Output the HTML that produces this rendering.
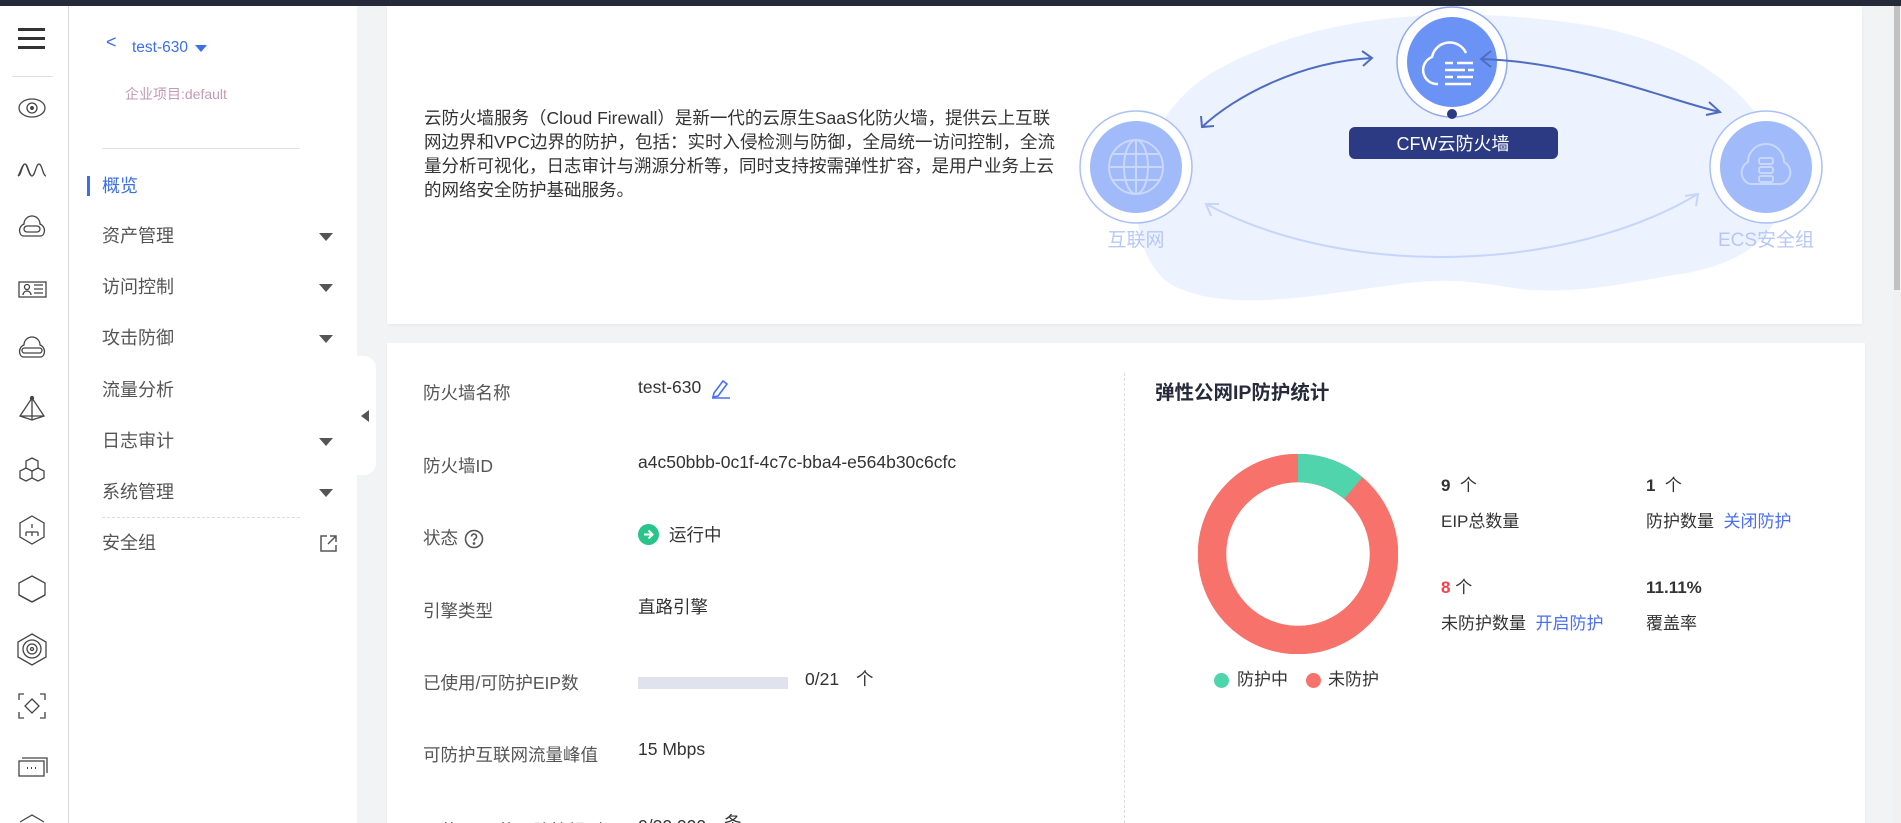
<!DOCTYPE html>
<html><head><meta charset="utf-8">
<style>
*{margin:0;padding:0;box-sizing:border-box}
html,body{width:1901px;height:823px;overflow:hidden}
body{background:#f2f3f5;font-family:"Liberation Sans","Noto Sans CJK SC",sans-serif;position:relative;color:#333}
.a{position:absolute;white-space:nowrap}
.top{left:0;top:0;width:1901px;height:6px;background:#252a3a}
.rail{left:0;top:6px;width:69px;height:817px;background:#fff;border-right:1px solid #d8d8d8}
.side{left:69px;top:6px;width:288px;height:817px;background:#fff}
.menu{font-size:18px;color:#555;left:102px;line-height:22px}
.tri{width:0;height:0;border-left:7px solid transparent;border-right:7px solid transparent;border-top:8px solid #555;left:319px}
.card{background:#fff;box-shadow:0 1px 3px rgba(0,0,0,.05)}
.lbl{left:423px;font-size:17.5px;color:#555;line-height:22px}
.val{left:638px;font-size:17.5px;color:#333;line-height:22px}
.st{font-size:17px;color:#333;line-height:22px}
</style></head><body>
<div class="a top"></div>
<div class="a rail"></div>
<div class="a side"></div>
<div class="a" style="left:18px;top:28px;width:27px;height:3px;background:#333"></div>
<div class="a" style="left:18px;top:37px;width:27px;height:3px;background:#333"></div>
<div class="a" style="left:18px;top:46px;width:27px;height:3px;background:#333"></div>
<div class="a" style="left:12px;top:76px;width:41px;height:1px;background:#dde0ea"></div>
<svg class="a" style="left:0;top:80px" width="69" height="743" fill="none" stroke="#444" stroke-width="1.3">
<ellipse cx="32" cy="28" rx="13" ry="9"/><circle cx="32" cy="28" r="5"/><circle cx="32" cy="28" r="1.3" fill="#444"/>
<path d="M18 96c3 0 4-12 7-12s4 12 7 12 4-12 7-12 4 12 7 12M18 96c2-2 4-12 7-12M25 84c2 0 4 12 7 12"/>
<path d="M20 153a7 7 0 0 1 4-9a8 8 0 0 1 16 0a7 7 0 0 1 4 9a4 4 0 0 1-4 3h-16a4 4 0 0 1-4-3z"/><rect x="24" y="146" width="16" height="6" rx="3"/>
<rect x="19" y="202" width="27" height="15"/><circle cx="27" cy="207" r="2.5"/><path d="M23 215a4 4 0 0 1 8 0M34 205h9M34 209h9M34 213h9"/>
<path d="M20 274a7 7 0 0 1 4-9a8 8 0 0 1 16 0a7 7 0 0 1 4 9a4 4 0 0 1-4 3h-16a4 4 0 0 1-4-3z"/><rect x="22" y="268" width="20" height="5" rx="2.5"/>
<path d="M32 318v22M32 318l-12 18 12 4 12-4zM20 336h24"/><circle cx="32" cy="318" r="1.5" fill="#444"/>
<path d="M32 378l6 3v7l-6 3-6-3v-7zM26 388l6 3v7l-6 3-6-3v-7zM38 388l6 3v7l-6 3-6-3v-7z"/>
<path d="M32 436l12 7v14l-12 7-12-7v-14z"/><path d="M32 444v4M26 452h12M26 452v4M32 452v4M38 452v4"/>
<path d="M32 496l13 7v12l-13 7-13-7v-12z"/><path d="M19 515l13 7 13-7"/>
<path d="M32 554l14 8v15l-14 8-14-8v-15z"/><circle cx="32" cy="569" r="9"/><circle cx="32" cy="569" r="5"/><circle cx="32" cy="569" r="1.5"/>
<path d="M19 620v-6h5M45 620v-6h-5M19 632v6h5M45 632v6h-5M32 619l7 7-7 7-7-7z"/>
<rect x="19" y="681" width="25" height="15"/><path d="M22 678h25v15"/><path d="M27 688h1M31 688h1M35 688h1" stroke-width="2"/>
<path d="M20 742l12-7 12 7"/>
</svg>
<div class="a" style="left:106px;top:32px;font-size:18px;color:#3b6fe8">&lt;</div>
<div class="a" style="left:132px;top:39px;font-size:15.5px;color:#3b6fe8">test-630</div>
<div class="a" style="left:195px;top:45px;width:0;height:0;border-left:6px solid transparent;border-right:6px solid transparent;border-top:7px solid #3b6fe8"></div>
<div class="a" style="left:125px;top:84px;font-size:14px;color:#c49ab8">企业项目:default</div>
<div class="a" style="left:102px;top:148px;width:198px;height:1px;background:#e3e3e3"></div>
<div class="a" style="left:87px;top:176px;width:3px;height:20px;background:#3b6fe8"></div>
<div class="a menu" style="top:175px;color:#3b6fe8">概览</div>
<div class="a menu" style="top:225px">资产管理</div><div class="a tri" style="top:233px"></div>
<div class="a menu" style="top:276px">访问控制</div><div class="a tri" style="top:284px"></div>
<div class="a menu" style="top:327px">攻击防御</div><div class="a tri" style="top:335px"></div>
<div class="a menu" style="top:379px">流量分析</div>
<div class="a menu" style="top:430px">日志审计</div><div class="a tri" style="top:438px"></div>
<div class="a menu" style="top:481px">系统管理</div><div class="a tri" style="top:489px"></div>
<div class="a" style="left:102px;top:517px;width:198px;border-top:1px dashed #ddd"></div>
<div class="a menu" style="top:532px">安全组</div>
<svg class="a" style="left:319px;top:534px" width="19" height="19" fill="none" stroke="#555" stroke-width="1.5"><path d="M8 2H2v15h15v-6M11 2h6v6M17 2l-8 8"/></svg>
<div class="a" style="left:357px;top:356px;width:19px;height:119px;background:#fff;border-radius:0 12px 12px 0"></div>
<div class="a" style="left:361px;top:410px;width:0;height:0;border-top:6px solid transparent;border-bottom:6px solid transparent;border-right:8px solid #555"></div>
<div class="a card" style="left:387px;top:6px;width:1475px;height:318px"></div>
<div class="a" style="left:424px;top:106px;font-size:17.5px;line-height:24px;color:#333">云防火墙服务（Cloud Firewall）是新一代的云原生SaaS化防火墙，提供云上互联<br>网边界和VPC边界的防护，包括：实时入侵检测与防御，全局统一访问控制，全流<br>量分析可视化，日志审计与溯源分析等，同时支持按需弹性扩容，是用户业务上云<br>的网络安全防护基础服务。</div>
<svg class="a" style="left:1060px;top:6px" width="800" height="318">
<path d="M110 280 C55 240 70 120 150 70 C270 0 420 5 520 20 C620 35 690 80 720 150 C740 220 690 260 620 270 C560 280 520 290 460 285 C400 275 380 275 340 280 C250 292 165 310 110 280Z" fill="#ecf2fe" transform="translate(0,-2)"/>
<circle cx="392" cy="56" r="55" fill="#fff" stroke="#8fa9f5" stroke-width="1.5"/>
<circle cx="392" cy="56" r="45" fill="#6b93f6"/>
<path d="M378 78a14 14 0 0 1-6-27a18 18 0 0 1 34-4" fill="none" stroke="#fff" stroke-width="2.5"/>
<path d="M385 57h8M397 57h16M385 64h20M408 64h6M385 71h8M397 71h16M385 78h26" stroke="#fff" stroke-width="2.5"/>
<circle cx="392" cy="108" r="5" fill="#2b3a82"/>
<rect x="289" y="121" width="209" height="32" rx="6" fill="#2b3a82"/>
<text x="393" y="144" font-size="18" fill="#fff" text-anchor="middle" font-family="Liberation Sans,Noto Sans CJK SC,sans-serif">CFW云防火墙</text>
<circle cx="76" cy="161" r="56" fill="#fff" stroke="#a9bff8" stroke-width="1.5"/>
<circle cx="76" cy="161" r="46" fill="#a1baf9"/>
<g fill="none" stroke="#c9d7fb" stroke-width="2"><circle cx="76" cy="161" r="27"/><ellipse cx="76" cy="161" rx="12" ry="27"/><path d="M76 134v54M49 161h54M53 148h46M53 174h46"/></g>
<text x="76" y="240" font-size="19" fill="#b6c8f7" text-anchor="middle" font-family="Liberation Sans,Noto Sans CJK SC,sans-serif">互联网</text>
<circle cx="706" cy="161" r="56" fill="#fff" stroke="#a9bff8" stroke-width="1.5"/>
<circle cx="706" cy="161" r="46" fill="#a1baf9"/>
<path d="M690 178a12 12 0 0 1-2-22a18 18 0 0 1 36 0a12 12 0 0 1-2 22z" fill="none" stroke="#c9d7fb" stroke-width="2"/>
<g fill="none" stroke="#c9d7fb" stroke-width="2"><rect x="699" y="152" width="14" height="6" rx="2"/><rect x="699" y="161" width="14" height="6" rx="2"/><rect x="699" y="170" width="14" height="6" rx="2"/></g>
<text x="706" y="240" font-size="19" fill="#b6c8f7" text-anchor="middle" font-family="Liberation Sans,Noto Sans CJK SC,sans-serif">ECS安全组</text>
<g fill="none" stroke="#4f6dc0" stroke-width="2">
<path d="M312 52C240 56 175 90 142 121"/><path d="M302 45l10 7-9 8M141 110l1 11 12-1"/>
<path d="M421 53C520 56 610 95 660 106"/><path d="M431 45l-10 8 10 8M649 96l11 10-14 3"/>
</g>
<g fill="none" stroke="#c6d5fb" stroke-width="2">
<path d="M146 198C290 275 510 265 638 188"/><path d="M159 198l-13 0 5 12M625 190l13-2-2 12"/>
</g>
</svg>
<div class="a card" style="left:387px;top:343px;width:1478px;height:480px"></div>
<div class="a" style="left:1124px;top:373px;height:450px;border-left:1px dashed #ddd"></div>
<div class="a lbl" style="top:382px">防火墙名称</div>
<div class="a val" style="top:376px">test-630</div>
<svg class="a" style="left:711px;top:378px" width="20" height="22" fill="none" stroke="#4a6ef5" stroke-width="1.6"><path d="M3 15l9-12 4 3-9 12-5 1z"/><path d="M1 20h18"/></svg>
<div class="a lbl" style="top:455px">防火墙ID</div>
<div class="a val" style="top:451px">a4c50bbb-0c1f-4c7c-bba4-e564b30c6cfc</div>
<div class="a lbl" style="top:527px">状态</div>
<svg class="a" style="left:464px;top:529px" width="20" height="20" fill="none" stroke="#555" stroke-width="1.6"><circle cx="10" cy="10" r="8.5"/><path d="M7.5 7.5a2.5 2.5 0 1 1 3.5 2.3c-.8.4-1 1-1 2"/><circle cx="10" cy="14.5" r=".6" fill="#555"/></svg>
<svg class="a" style="left:638px;top:524px" width="21" height="21"><circle cx="10.5" cy="10.5" r="10.5" fill="#29c48a"/><path d="M6 10.5h8M10.5 6.5l4 4-4 4" fill="none" stroke="#fff" stroke-width="2"/></svg>
<div class="a val" style="top:524px;left:669px">运行中</div>
<div class="a lbl" style="top:600px">引擎类型</div>
<div class="a val" style="top:596px">直路引擎</div>
<div class="a lbl" style="top:672px">已使用/可防护EIP数</div>
<div class="a" style="left:638px;top:677px;width:150px;height:12px;background:#e0e3ee"></div>
<div class="a val" style="top:668px;left:805px">0/21</div>
<div class="a val" style="top:668px;left:856px">个</div>
<div class="a lbl" style="top:744px">可防护互联网流量峰值</div>
<div class="a val" style="top:738px">15 Mbps</div>
<div class="a lbl" style="top:820px">已使用/可使用防护规则</div>
<div class="a val" style="top:815px">0/20,000</div>
<div class="a val" style="top:812px;left:724px">条</div>
<div class="a" style="left:1155px;top:376px;font-size:19.5px;font-weight:bold;color:#252b3a">弹性公网IP防护统计</div>
<svg class="a" style="left:1198px;top:454px" width="200" height="200">
<circle cx="100" cy="100" r="86" fill="none" stroke="#f6726b" stroke-width="28.5"/>
<circle cx="100" cy="100" r="86" fill="none" stroke="#4fd4ab" stroke-width="28.5" stroke-dasharray="60 481" transform="rotate(-90 100 100)"/>
</svg>
<div class="a" style="left:1214px;top:673px;width:15px;height:15px;border-radius:50%;background:#4fd4ab"></div>
<div class="a st" style="left:1237px;top:669px">防护中</div>
<div class="a" style="left:1306px;top:673px;width:15px;height:15px;border-radius:50%;background:#f6726b"></div>
<div class="a st" style="left:1328px;top:669px">未防护</div>
<div class="a st" style="left:1441px;top:475px;font-weight:bold">9 <span style="font-weight:normal">&nbsp;个</span></div>
<div class="a st" style="left:1441px;top:511px">EIP总数量</div>
<div class="a st" style="left:1646px;top:475px;font-weight:bold">1 <span style="font-weight:normal">&nbsp;个</span></div>
<div class="a st" style="left:1646px;top:511px">防护数量 <span style="color:#4a6ef5">&nbsp;关闭防护</span></div>
<div class="a st" style="left:1441px;top:577px;font-weight:bold;color:#f5414a">8 <span style="font-weight:normal;color:#333">个</span></div>
<div class="a st" style="left:1441px;top:613px">未防护数量 <span style="color:#4a6ef5">&nbsp;开启防护</span></div>
<div class="a st" style="left:1646px;top:577px;font-weight:bold">11.11%</div>
<div class="a st" style="left:1646px;top:613px">覆盖率</div>
<div class="a" style="left:1893px;top:6px;width:8px;height:817px;background:#f1f1f1"></div>
<div class="a" style="left:1894px;top:6px;width:6px;height:284px;background:#c1c1c1"></div>
</body></html>
